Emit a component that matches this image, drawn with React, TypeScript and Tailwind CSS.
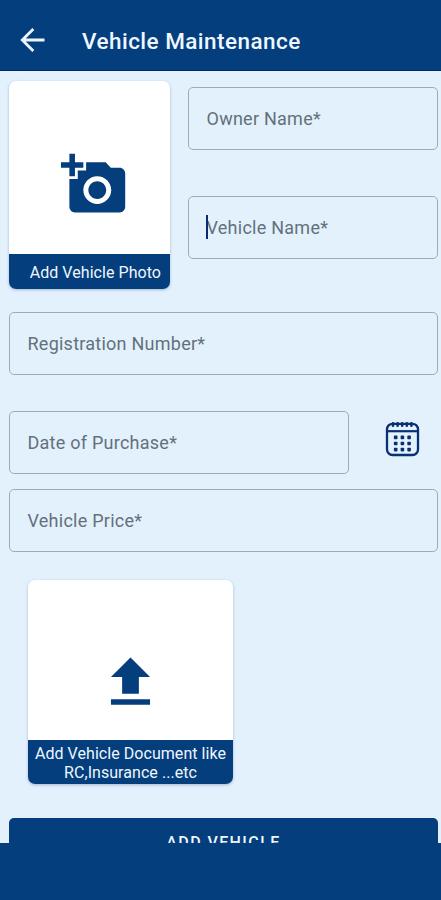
import { clsx } from 'clsx';
import { MdAddAPhoto } from 'react-icons/md';

interface FieldProps {
  label: string;
  focused?: boolean;
  className?: string;
}

function Field({ label, focused, className }: FieldProps) {
  return (
    <div
      className={clsx(
        'relative flex h-[63px] items-center rounded-[5px] border-[1.5px] border-[#9fabb8] pl-[17.5px] text-[18px] tracking-[0.25px] text-[#64707b]',
        className
      )}
    >
      {focused && (
        <span className="absolute left-[17px] top-[18px] h-6 w-0.5 bg-[#0b2a72]" />
      )}
      {label}
    </div>
  );
}

function BackIcon() {
  return (
    <svg
      className="ml-5 h-6 w-[25px]"
      viewBox="0 0 25 24"
      fill="none"
      stroke="currentColor"
      strokeWidth="2.8"
    >
      <path d="M24.5 12H2.5M13.3 1 2.3 12l11 11" />
    </svg>
  );
}

function UploadIcon() {
  return (
    <svg className="size-[67px]" viewBox="0 0 24 24" fill="currentColor">
      <path d="M9 16h6v-6h4l-7-7-7 7h4zM5 18h14v2H5z" />
    </svg>
  );
}

function CalendarIcon() {
  return (
    <svg className="h-[37px] w-[35px]" viewBox="0 0 35 37" fill="none">
      <rect
        x="2"
        y="2.8"
        width="31"
        height="31.2"
        rx="5.5"
        stroke="#0b2f73"
        strokeWidth="2.3"
      />
      <path d="M2 10.2h31" stroke="#0b2f73" strokeWidth="2.2" />
      <path
        d="M8 2.2v2.6M12.6 2.2v2.6M17.2 2.2v2.6M21.8 2.2v2.6M26.4 2.2v2.6"
        stroke="#0b2f73"
        strokeWidth="2.6"
        strokeLinecap="round"
      />
      {[16.4, 22.5, 28.6].map((y) =>
        [10.7, 17.4, 24.1].map((x) => (
          <rect
            key={`${x}-${y}`}
            x={x - 1.8}
            y={y - 1.8}
            width="3.6"
            height="3.6"
            rx="0.8"
            fill="#0b2f73"
          />
        ))
      )}
    </svg>
  );
}

export default function App() {
  return (
    <div className="flex h-[900px] w-[441px] flex-col overflow-hidden bg-[#e3f1fd] font-[Roboto,sans-serif]">
      <header className="flex h-[71px] shrink-0 items-center border-b border-[#04256b] bg-[#043e7c] pt-2.5 text-[#eef7ff]">
        <BackIcon />
        <h1 className="ml-[37px] mt-1 text-[22.5px] font-medium tracking-[0.46px]">
          Vehicle Maintenance
        </h1>
      </header>

      <main className="h-[772px] overflow-hidden pl-[9px] pr-[3px] pt-2.5">
        <div className="flex items-start gap-[18px]">
          <div className="flex h-[208px] w-[161px] flex-col overflow-hidden rounded-[7px] bg-white shadow-[0_1px_3px_rgba(40,80,120,0.35)]">
            <div className="flex-1 pl-13 pt-[70px]">
              <MdAddAPhoto className="size-[67px] text-[#043e7c]" />
            </div>
            <div className="flex h-[35px] items-center justify-end bg-[#043e7c] pr-[9px] pt-0.5 text-[16px] tracking-[0.05px] text-[#eef7ff]">
              Add Vehicle Photo
            </div>
          </div>
          <div className="flex flex-1 flex-col gap-[46px] pt-[6px]">
            <Field label="Owner Name*" />
            <Field label="Vehicle Name*" focused />
          </div>
        </div>

        <Field label="Registration Number*" className="mt-[23px]" />
        <div className="mt-[36px] flex">
          <Field label="Date of Purchase*" className="w-[340px] pb-px" />
          <div className="ml-9 pt-[10px]">
            <CalendarIcon />
          </div>
        </div>
        <Field label="Vehicle Price*" className="mt-[15px]" />

        <div className="ml-[19px] mt-[28px] flex h-[204px] w-[205px] flex-col overflow-hidden rounded-[7px] bg-white shadow-[0_1px_3px_rgba(40,80,120,0.35)]">
          <div className="flex-1 pl-[69px] pt-[69px] text-[#043e7c]">
            <UploadIcon />
          </div>
          <div className="h-11 bg-[#043e7c] pt-1 text-center text-[16px] leading-[19px] tracking-[0.05px] text-[#eef7ff]">
            Add Vehicle Document like
            <br />
            RC,Insurance ...etc
          </div>
        </div>

        <button className="mt-[34px] flex h-14 w-full justify-center rounded-[5px] bg-[#043e7c] pt-[13px] text-[16px] font-medium tracking-[1.4px] text-[#eef7ff]">
          ADD VEHICLE
        </button>
      </main>

      <footer className="flex-1 bg-[#043e7c]" />
    </div>
  );
}
